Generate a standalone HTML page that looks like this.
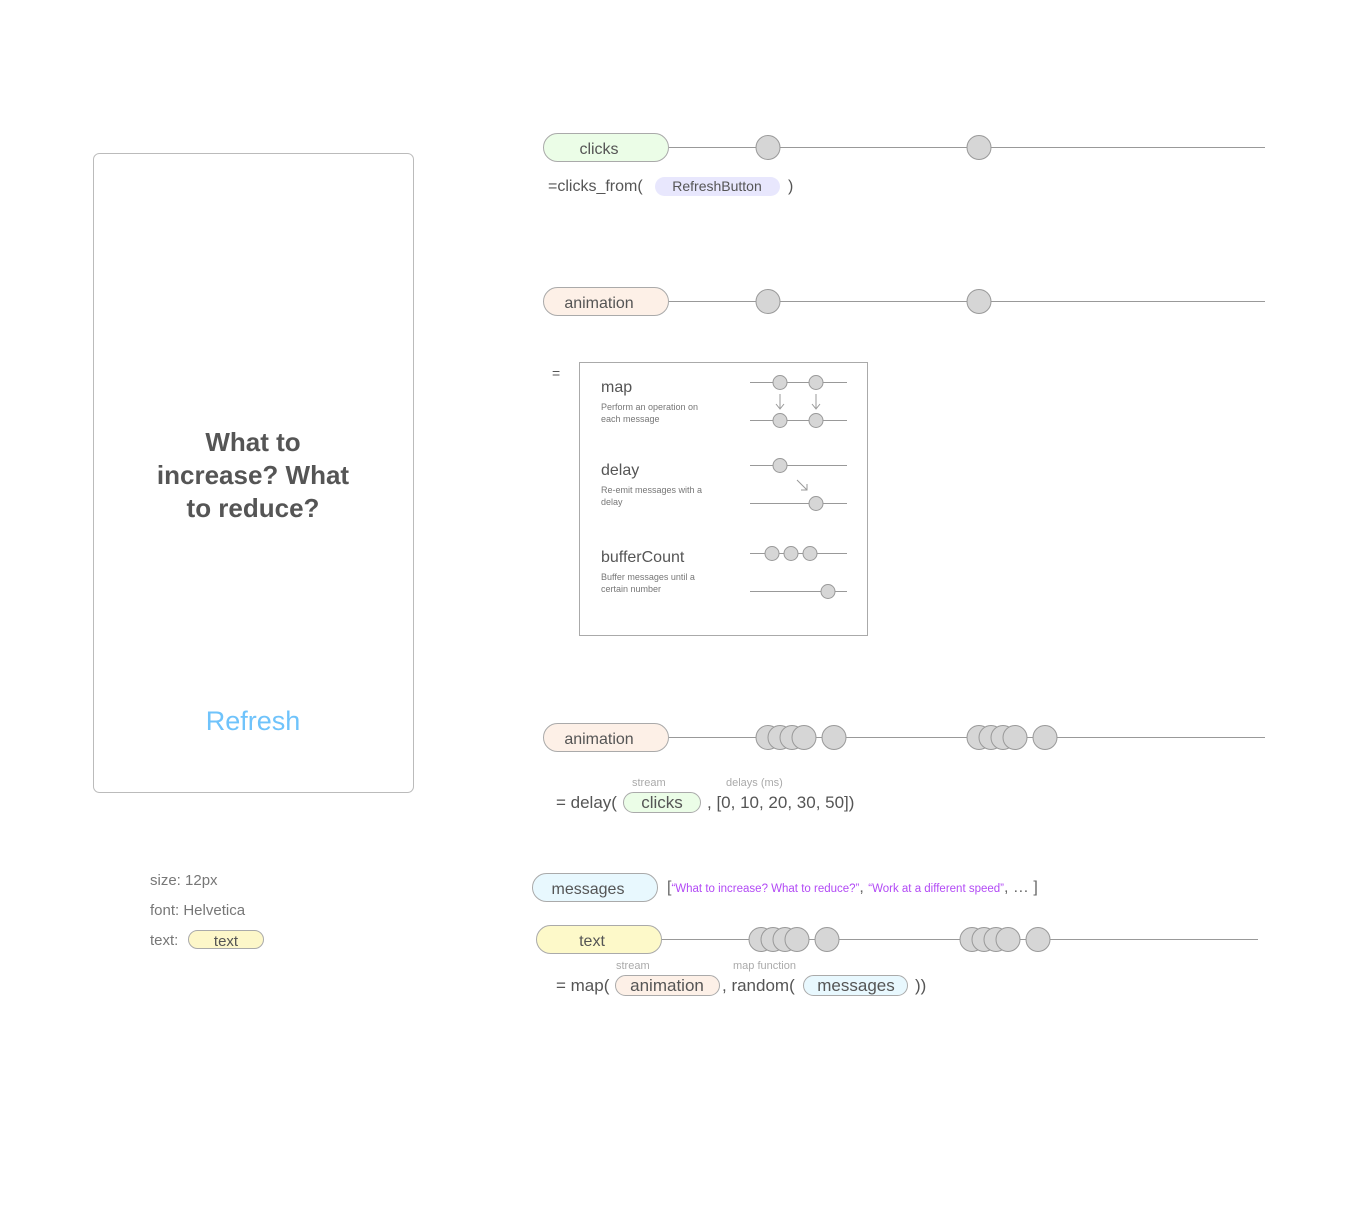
<!DOCTYPE html>
<html><head><meta charset="utf-8"><style>
html,body{margin:0;padding:0;background:#fff;}
svg{display:block;}
text{font-family:"Liberation Sans",Arial,sans-serif;}
</style></head><body>
<svg width="1361" height="1225" viewBox="0 0 1361 1225" xmlns="http://www.w3.org/2000/svg">
<defs>
<g id="c"><circle r="12" fill="#d6d6d6" stroke="#999" stroke-width="1"/></g>
<g id="s"><circle r="7" fill="#d6d6d6" stroke="#999" stroke-width="1"/></g>
</defs>
<!-- phone -->
<rect x="93.5" y="153.5" width="320" height="639" rx="6" fill="#fff" stroke="#bbb" stroke-width="1"/>
<g font-size="26" fill="#555" text-anchor="middle" font-weight="bold">
<text x="253" y="451">What to</text>
<text x="253" y="484">increase? What</text>
<text x="253" y="517">to reduce?</text>
</g>
<text x="253" y="730" font-size="27" fill="#6fc3fb" text-anchor="middle">Refresh</text>
<g font-size="15" fill="#777">
<text x="150" y="885">size: 12px</text>
<text x="150" y="915">font: Helvetica</text>
<text x="150" y="945">text:</text>
</g>
<rect x="188.5" y="930.5" width="75" height="18" rx="9" fill="#fdf7c9" stroke="#aaa"/>
<text x="226" y="946" font-size="15" fill="#555" text-anchor="middle">text</text>

<!-- clicks -->
<line x1="669" y1="147.5" x2="1265" y2="147.5" stroke="#999"/>
<rect x="543.5" y="133.5" width="125" height="28" rx="14" fill="#ebfde7" stroke="#aaa"/>
<text x="599" y="154" font-size="16" fill="#555" text-anchor="middle">clicks</text>
<use href="#c" x="768" y="147.5"/><use href="#c" x="979" y="147.5"/>
<text x="548" y="191" font-size="16" fill="#555">=clicks_from(</text>
<rect x="655" y="177" width="125" height="19" rx="9.5" fill="#e8e7fd"/>
<text x="717" y="191" font-size="14" fill="#555" text-anchor="middle">RefreshButton</text>
<text x="788" y="191" font-size="16" fill="#555">)</text>

<!-- animation 1 -->
<line x1="669" y1="301.5" x2="1265" y2="301.5" stroke="#999"/>
<rect x="543.5" y="287.5" width="125" height="28" rx="14" fill="#fdf0e7" stroke="#aaa"/>
<text x="599" y="308" font-size="16" fill="#555" text-anchor="middle">animation</text>
<use href="#c" x="768" y="301.5"/><use href="#c" x="979" y="301.5"/>

<!-- operators box -->
<text x="552" y="378" font-size="14" fill="#555">=</text>
<rect x="579.5" y="362.5" width="288" height="273" fill="#fff" stroke="#aaa"/>
<text x="601" y="392" font-size="16" fill="#555">map</text>
<text x="601" y="410" font-size="9" fill="#777">Perform an operation on</text>
<text x="601" y="422" font-size="9" fill="#777">each message</text>
<text x="601" y="475" font-size="16" fill="#555">delay</text>
<text x="601" y="493" font-size="9" fill="#777">Re-emit messages with a</text>
<text x="601" y="505" font-size="9" fill="#777">delay</text>
<text x="601" y="562" font-size="16" fill="#555">bufferCount</text>
<text x="601" y="580" font-size="9" fill="#777">Buffer messages until a</text>
<text x="601" y="592" font-size="9" fill="#777">certain number</text>
<g stroke="#999" fill="none">
<line x1="750" y1="382.5" x2="847" y2="382.5"/>
<line x1="750" y1="420.5" x2="847" y2="420.5"/>
<line x1="750" y1="465.5" x2="847" y2="465.5"/>
<line x1="750" y1="503.5" x2="847" y2="503.5"/>
<line x1="750" y1="553.5" x2="847" y2="553.5"/>
<line x1="750" y1="591.5" x2="847" y2="591.5"/>
<path d="M780 394v14M776 404l4 5 4-5M816 394v14M812 404l4 5 4-5M797 480l10 10M801 490h6v-6"/>
</g>
<use href="#s" x="780" y="382.5"/><use href="#s" x="816" y="382.5"/>
<use href="#s" x="780" y="420.5"/><use href="#s" x="816" y="420.5"/>
<use href="#s" x="780" y="465.5"/><use href="#s" x="816" y="503.5"/>
<use href="#s" x="772" y="553.5"/><use href="#s" x="791" y="553.5"/><use href="#s" x="810" y="553.5"/>
<use href="#s" x="828" y="591.5"/>

<!-- animation 2 -->
<line x1="669" y1="737.5" x2="1265" y2="737.5" stroke="#999"/>
<rect x="543.5" y="723.5" width="125" height="28" rx="14" fill="#fdf0e7" stroke="#aaa"/>
<text x="599" y="744" font-size="16" fill="#555" text-anchor="middle">animation</text>
<use href="#c" x="768" y="737.5"/><use href="#c" x="780" y="737.5"/><use href="#c" x="792" y="737.5"/><use href="#c" x="804" y="737.5"/><use href="#c" x="834" y="737.5"/>
<use href="#c" x="979" y="737.5"/><use href="#c" x="991" y="737.5"/><use href="#c" x="1003" y="737.5"/><use href="#c" x="1015" y="737.5"/><use href="#c" x="1045" y="737.5"/>
<text x="632" y="786" font-size="11" fill="#aaa">stream</text>
<text x="726" y="786" font-size="11" fill="#aaa">delays (ms)</text>
<text x="556" y="808" font-size="17" fill="#555">= delay(</text>
<rect x="623.5" y="792.5" width="77" height="20" rx="10" fill="#ebfde7" stroke="#aaa"/>
<text x="662" y="808" font-size="17" fill="#555" text-anchor="middle">clicks</text>
<text x="707" y="808" font-size="17" fill="#555">, [0, 10, 20, 30, 50])</text>

<!-- messages -->
<rect x="532.5" y="873.5" width="125" height="28" rx="14" fill="#e8f8fe" stroke="#aaa"/>
<text x="588" y="894" font-size="16" fill="#555" text-anchor="middle">messages</text>
<text x="667" y="892" font-size="16" fill="#666">[<tspan font-size="11.5" fill="#b24af5">“What to increase? What to reduce?”</tspan>, <tspan font-size="11.5" fill="#b24af5">“Work at a different speed”</tspan>, … ]</text>

<!-- text -->
<line x1="662" y1="939.5" x2="1258" y2="939.5" stroke="#999"/>
<rect x="536.5" y="925.5" width="125" height="28" rx="14" fill="#fdf9c9" stroke="#aaa"/>
<text x="592" y="946" font-size="16" fill="#555" text-anchor="middle">text</text>
<use href="#c" x="761" y="939.5"/><use href="#c" x="773" y="939.5"/><use href="#c" x="785" y="939.5"/><use href="#c" x="797" y="939.5"/><use href="#c" x="827" y="939.5"/>
<use href="#c" x="972" y="939.5"/><use href="#c" x="984" y="939.5"/><use href="#c" x="996" y="939.5"/><use href="#c" x="1008" y="939.5"/><use href="#c" x="1038" y="939.5"/>
<text x="616" y="969" font-size="11" fill="#aaa">stream</text>
<text x="733" y="969" font-size="11" fill="#aaa">map function</text>
<text x="556" y="991" font-size="17" fill="#555">= map(</text>
<rect x="615.5" y="975.5" width="104" height="20" rx="10" fill="#fdf0e7" stroke="#aaa"/>
<text x="667" y="991" font-size="17" fill="#555" text-anchor="middle">animation</text>
<text x="722" y="991" font-size="17" fill="#555">, random(</text>
<rect x="803.5" y="975.5" width="104" height="20" rx="10" fill="#e8f8fe" stroke="#aaa"/>
<text x="856" y="991" font-size="17" fill="#555" text-anchor="middle">messages</text>
<text x="915" y="991" font-size="17" fill="#555">))</text>
</svg>
</body></html>
